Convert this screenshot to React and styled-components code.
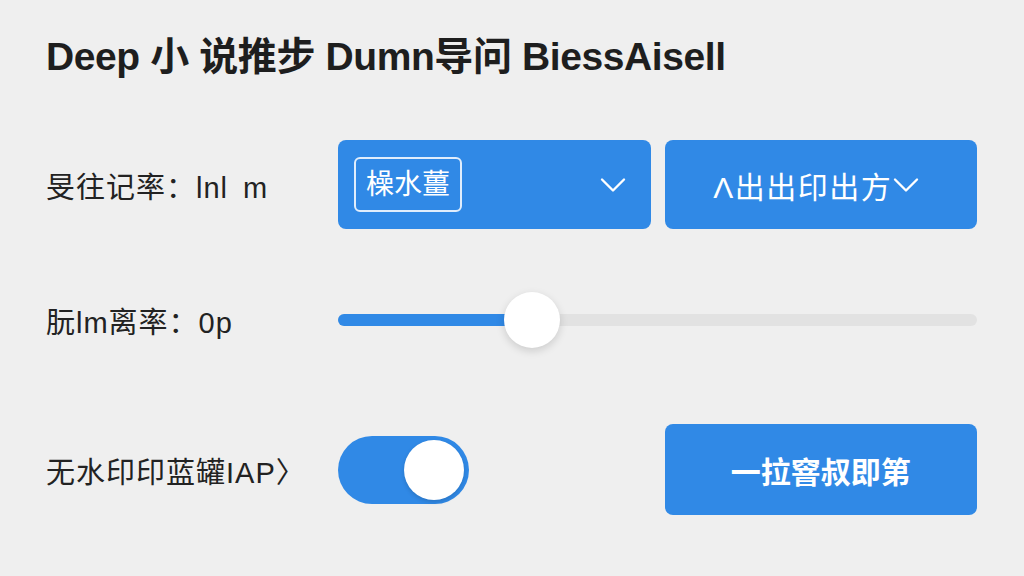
import React, { useState } from "react";
import styled, { createGlobalStyle } from "styled-components";
import { ChevronDown } from "lucide-react";

const GlobalStyle = createGlobalStyle`
  html, body {
    margin: 0;
    padding: 0;
    background: #efefef;
  }
  body {
    font-family: "Liberation Sans", "Noto Sans CJK SC", sans-serif;
    color: #222222;
  }
`;

const Page = styled.div`
  width: 1024px;
  height: 576px;
  box-sizing: border-box;
  padding: 37px 47px 0 46px;
  background: #efefef;
`;

const Title = styled.h1`
  margin: 0;
  font-size: 39px;
  line-height: 40px;
  font-weight: 700;
  color: #1e1e1e;
  letter-spacing: -0.4px;
  white-space: nowrap;
`;

const Row = styled.div`
  display: grid;
  grid-template-columns: 292px 1fr;
  align-items: center;
  margin-top: ${(p) => p.$gap}px;
  height: ${(p) => p.$h}px;
`;

const Label = styled.div`
  font-size: 29px;
  letter-spacing: 1px;
  word-spacing: 6px;
  color: #222222;
  white-space: nowrap;
`;

const Pair = styled.div`
  display: grid;
  grid-template-columns: 1fr 1fr;
  gap: 14px;
  align-items: center;
  height: 100%;
`;

const Select = styled.div`
  height: 89px;
  border-radius: 8px;
  background: #3089e6;
  color: #ffffff;
  display: flex;
  align-items: center;
  justify-content: ${(p) => (p.$center ? "center" : "space-between")};
  padding: 0 16px 0 16px;
  box-sizing: border-box;
  font-size: ${(p) => (p.$center ? 30 : 28)}px;
  letter-spacing: ${(p) => (p.$center ? 1.5 : 0)}px;
`;

const Chip = styled.span`
  border: 2px solid rgba(255, 255, 255, 0.85);
  border-radius: 6px;
  padding: 8px 10px;
  line-height: 35px;
`;

const Chevron = styled(ChevronDown)`
  flex-shrink: 0;
  margin-left: ${(p) => (p.$tight ? -8 : 0)}px;
`;

const Slider = styled.div`
  position: relative;
  height: 56px;
  display: flex;
  align-items: center;
`;

const Track = styled.div`
  position: relative;
  width: 100%;
  height: 12px;
  border-radius: 6px;
  background: #e2e2e2;
`;

const Fill = styled.div`
  height: 100%;
  border-radius: 6px;
  background: #3089e6;
`;

const Thumb = styled.div`
  position: absolute;
  top: 50%;
  width: 56px;
  height: 56px;
  border-radius: 50%;
  background: #ffffff;
  transform: translate(-50%, -50%);
  box-shadow: 0 3px 8px rgba(0, 0, 0, 0.15);
`;

const Toggle = styled.button`
  width: 131px;
  height: 68px;
  border: none;
  border-radius: 34px;
  background: #3089e6;
  padding: 4px 5px;
  display: flex;
  align-items: center;
  justify-content: ${(p) => (p.$on ? "flex-end" : "flex-start")};
  cursor: pointer;
  box-sizing: border-box;
`;

const Knob = styled.span`
  width: 60px;
  height: 60px;
  border-radius: 50%;
  background: #ffffff;
  box-shadow: 0 2px 4px rgba(0, 0, 0, 0.15);
`;

const Action = styled.button`
  height: 91px;
  border: none;
  border-radius: 8px;
  background: #3089e6;
  color: #ffffff;
  font-family: "Liberation Sans", "Noto Sans CJK SC", sans-serif;
  font-size: 30px;
  font-weight: 700;
  cursor: pointer;
`;

export default function App() {
  const [on, setOn] = useState(true);
  const value = 30.3;

  return (
    <Page>
      <GlobalStyle />
      <Title>Deep 小 说推步 Dumn导问 BiessAisell</Title>

      <Row $gap={63} $h={89}>
        <Label>旻往记率：lnl m</Label>
        <Pair>
          <Select>
            <Chip>橾水薑</Chip>
            <Chevron size={44} strokeWidth={1.3} />
          </Select>
          <Select $center>
            <span>Λ出出印出方</span>
            <Chevron $tight size={44} strokeWidth={1.3} />
          </Select>
        </Pair>
      </Row>

      <Row $gap={63} $h={56}>
        <Label>朊lm离率：0p</Label>
        <Slider>
          <Track>
            <Fill style={{ width: `${value}%` }} />
            <Thumb style={{ left: `${value}%` }} />
          </Track>
        </Slider>
      </Row>

      <Row $gap={76} $h={91}>
        <Label>无水印印蓝罐IAP〉</Label>
        <Pair>
          <Toggle $on={on} onClick={() => setOn(!on)}>
            <Knob />
          </Toggle>
          <Action>一拉窨叔即第</Action>
        </Pair>
      </Row>
    </Page>
  );
}
